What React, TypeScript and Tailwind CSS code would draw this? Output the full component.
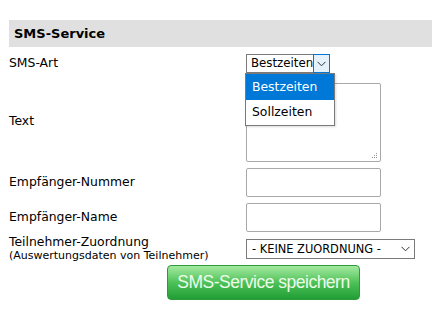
const ChevronDown = ({ className }: { className?: string }) => (
  <svg className={className} width="9" height="6" viewBox="0 0 9 6" fill="none">
    <path d="M0.5 0.8 L4.5 4.8 L8.5 0.8" stroke="#333" strokeWidth="1" />
  </svg>
);

const App = () => {
  return (
    <div className="w-[432px] h-[315px] bg-white overflow-hidden text-[12.4px] text-black font-['DejaVu_Sans',Verdana,sans-serif]">
      <div className="pt-[20px] pl-[9px]">
        <div className="h-[27px] bg-[#e0e0e0] flex items-center pl-[5px]">
          <span className="font-bold text-[13px]">SMS-Service</span>
        </div>

        {/* SMS-Art */}
        <div className="flex items-center mt-[7px] h-[19px]">
          <div className="w-[237px]">SMS-Art</div>
          <div className="relative">
            <div className="flex h-[19px] w-[84px] border border-[#7a7a7a] bg-white">
              <span className="flex-1 pl-[4px] text-[11.8px] leading-[17px]">Bestzeiten</span>
              <span className="w-[17px] -my-px -mr-px border border-[#0078d7] bg-[#e5f1fb] flex items-center justify-center">
                <ChevronDown />
              </span>
            </div>
            <div className="absolute left-[-1px] top-[19px] w-[90px] border border-[#7a7a7a] bg-white z-10 shadow-[1px_1px_2px_rgba(0,0,0,0.15)]">
              <div className="h-[26px] bg-[#0078d7] text-white pl-[6px] flex items-center">Bestzeiten</div>
              <div className="h-[25px] pl-[6px] flex items-center">Sollzeiten</div>
            </div>
          </div>
        </div>

        {/* Text */}
        <div className="flex items-center mt-[10px] h-[79px]">
          <div className="w-[237px] -mt-[2px]">Text</div>
          <div className="relative w-[135px] h-[79px] border border-[#a9a9a9] rounded-[2px]">
            <svg className="absolute right-[2px] bottom-[2px]" width="7" height="7" viewBox="0 0 7 7">
              <rect x="5" y="1" width="1" height="1" fill="#999" />
              <rect x="3" y="3" width="1" height="1" fill="#999" />
              <rect x="5" y="3" width="1" height="1" fill="#999" />
              <rect x="1" y="5" width="1" height="1" fill="#999" />
              <rect x="3" y="5" width="1" height="1" fill="#999" />
              <rect x="5" y="5" width="1" height="1" fill="#999" />
            </svg>
          </div>
        </div>

        {/* Empfänger-Nummer */}
        <div className="flex items-center mt-[6px] h-[29px]">
          <div className="w-[237px]">Empfänger-Nummer</div>
          <div className="w-[135px] h-[29px] border border-[#a9a9a9] rounded-[2px]" />
        </div>

        {/* Empfänger-Name */}
        <div className="flex items-center mt-[6px] h-[29px]">
          <div className="w-[237px]">Empfänger-Name</div>
          <div className="w-[135px] h-[29px] border border-[#a9a9a9] rounded-[2px]" />
        </div>

        {/* Teilnehmer-Zuordnung */}
        <div className="flex items-center mt-[7px] h-[20px]">
          <div className="w-[237px] -mt-[1px]">
            <div className="leading-[14px]">Teilnehmer-Zuordnung</div>
            <div className="text-[11px] leading-[13px]">(Auswertungsdaten von Teilnehmer)</div>
          </div>
          <div className="flex items-center w-[169px] h-[20px] border border-[#7a7a7a] pl-[5px] pr-[4px]">
            <span className="flex-1 text-[11.4px] leading-[18px]">- KEINE ZUORDNUNG -</span>
            <ChevronDown />
          </div>
        </div>

        {/* Button */}
        <div className="flex mt-[6px] pl-[158px]">
          <button className="w-[193px] h-[35px] rounded-[4px] border border-[#2f9a3c] bg-gradient-to-b from-[#a3eaa0] via-[#4cc259] to-[#1f9e35] text-[#eefbe9] text-[17.5px] tracking-[-0.5px] font-['Liberation_Sans',Arial,sans-serif]">
            SMS-Service speichern
          </button>
        </div>
      </div>
    </div>
  );
};

export default App;
